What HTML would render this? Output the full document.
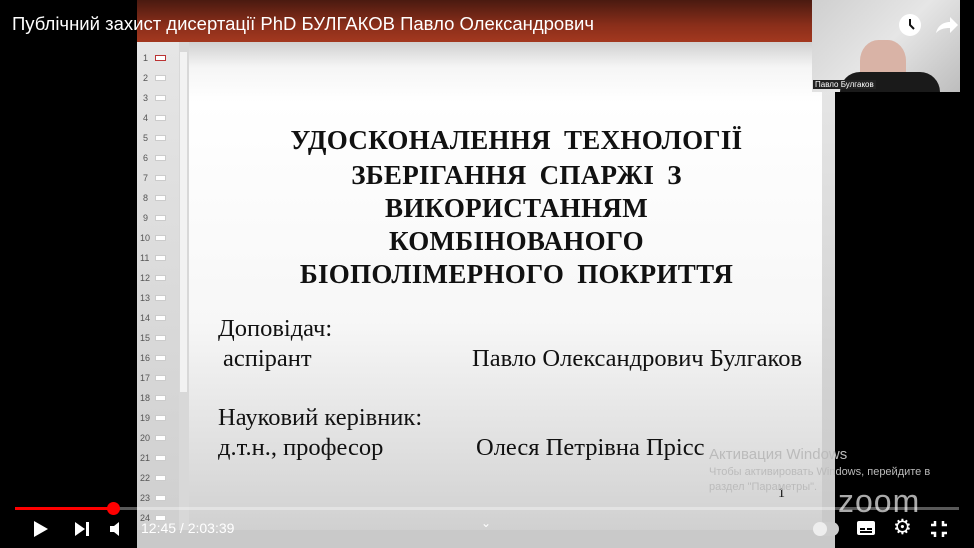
<!DOCTYPE html>
<html><head><meta charset="utf-8"><style>
*{margin:0;padding:0;box-sizing:border-box}
body{width:974px;height:548px;background:#000;position:relative;overflow:hidden;font-family:"Liberation Sans",sans-serif}
.abs{position:absolute}
#topbar{left:137px;top:0;width:698px;height:42px;background:linear-gradient(#4a1a10,#8a2e1a 60%,#a3381f)}
#thumbs{left:137px;top:42px;width:42px;height:490px;background:linear-gradient(#e6e6e6,#cfcfcf)}
#tsb{left:179px;top:42px;width:10px;height:490px;background:#d8d8d8}
#tsb div{position:absolute;left:1px;top:10px;width:7px;height:340px;background:#f2f2f2}
#slide{left:189px;top:42px;width:633px;height:490px;background:linear-gradient(#d0d0d0 0px,#f5f5f5 25px,#ffffff 60px,#f7f7f7 280px,#d0d0d0 490px)}
#rsb{left:822px;top:42px;width:13px;height:490px;background:linear-gradient(#e8e8e8,#c8c8c8)}
#status{left:137px;top:530px;width:698px;height:18px;background:#c9c9c9}
.num{position:absolute;left:143px;font-size:9px;color:#555}
.tb{position:absolute;left:155px;width:11px;height:6px;background:#fff;border:1px solid #ccc}
.ttl{position:absolute;left:189px;width:633px;text-align:center;font-family:"Liberation Serif",serif;font-weight:bold;font-size:27px;color:#111;word-spacing:6px;letter-spacing:0.3px}
.bt{position:absolute;font-family:"Liberation Serif",serif;font-size:24.5px;color:#111;white-space:nowrap}
#title{left:12px;top:13px;color:#fff;font-size:18.5px;white-space:nowrap}
#cam{left:812px;top:0;width:148px;height:92px;background:linear-gradient(135deg,#cfcfcf,#e6e6e6 50%,#bdbdbd)}
.ctl{position:absolute;color:#fff}
</style></head><body>
<div id="topbar" class="abs"></div>
<div id="thumbs" class="abs"></div>
<div id="tsb" class="abs"><div></div></div>
<div id="slide" class="abs"></div>
<div id="rsb" class="abs"></div>
<div id="status" class="abs"></div>
<div class="num" style="top:53px">1</div><div class="tb" style="top:55px;border-color:#b33"></div>
<div class="num" style="top:73px">2</div><div class="tb" style="top:75px"></div>
<div class="num" style="top:93px">3</div><div class="tb" style="top:95px"></div>
<div class="num" style="top:113px">4</div><div class="tb" style="top:115px"></div>
<div class="num" style="top:133px">5</div><div class="tb" style="top:135px"></div>
<div class="num" style="top:153px">6</div><div class="tb" style="top:155px"></div>
<div class="num" style="top:173px">7</div><div class="tb" style="top:175px"></div>
<div class="num" style="top:193px">8</div><div class="tb" style="top:195px"></div>
<div class="num" style="top:213px">9</div><div class="tb" style="top:215px"></div>
<div class="num" style="top:233px;left:140px">10</div><div class="tb" style="top:235px"></div>
<div class="num" style="top:253px;left:140px">11</div><div class="tb" style="top:255px"></div>
<div class="num" style="top:273px;left:140px">12</div><div class="tb" style="top:275px"></div>
<div class="num" style="top:293px;left:140px">13</div><div class="tb" style="top:295px"></div>
<div class="num" style="top:313px;left:140px">14</div><div class="tb" style="top:315px"></div>
<div class="num" style="top:333px;left:140px">15</div><div class="tb" style="top:335px"></div>
<div class="num" style="top:353px;left:140px">16</div><div class="tb" style="top:355px"></div>
<div class="num" style="top:373px;left:140px">17</div><div class="tb" style="top:375px"></div>
<div class="num" style="top:393px;left:140px">18</div><div class="tb" style="top:395px"></div>
<div class="num" style="top:413px;left:140px">19</div><div class="tb" style="top:415px"></div>
<div class="num" style="top:433px;left:140px">20</div><div class="tb" style="top:435px"></div>
<div class="num" style="top:453px;left:140px">21</div><div class="tb" style="top:455px"></div>
<div class="num" style="top:473px;left:140px">22</div><div class="tb" style="top:475px"></div>
<div class="num" style="top:493px;left:140px">23</div><div class="tb" style="top:495px"></div>
<div class="num" style="top:513px;left:140px">24</div><div class="tb" style="top:515px"></div>

<div class="ttl" style="top:125px;left:200px">УДОСКОНАЛЕННЯ ТЕХНОЛОГІЇ</div>
<div class="ttl" style="top:160px;left:200px">ЗБЕРІГАННЯ СПАРЖІ З</div>
<div class="ttl" style="top:193px;left:200px">ВИКОРИСТАННЯМ</div>
<div class="ttl" style="top:226px;left:200px">КОМБІНОВАНОГО</div>
<div class="ttl" style="top:259px;left:200px">БІОПОЛІМЕРНОГО ПОКРИТТЯ</div>

<div class="bt" style="left:218px;top:315px">Доповідач:</div>
<div class="bt" style="left:223px;top:345px">аспірант</div>
<div class="bt" style="left:472px;top:345px">Павло Олександрович Булгаков</div>
<div class="bt" style="left:218px;top:404px">Науковий керівник:</div>
<div class="bt" style="left:218px;top:434px">д.т.н., професор</div>
<div class="bt" style="left:476px;top:434px">Олеся Петрівна Прісс</div>
<div class="bt" style="left:778px;top:486px;font-size:14px">1</div>

<div class="abs" style="left:709px;top:446px;color:#bbb;font-size:15px">Активация Windows</div>
<div class="abs" style="left:709px;top:466px;color:#bbb;font-size:11px">Чтобы активировать Windows, перейдите в</div>
<div class="abs" style="left:709px;top:481px;color:#bbb;font-size:11px">раздел "Параметры".</div>
<div class="abs" style="left:838px;top:483px;color:#aaa;font-size:32px;letter-spacing:1px">zoom</div>

<div id="cam" class="abs"></div>
<div class="abs" style="left:860px;top:40px;width:46px;height:52px;background:#d9b3a6;border-radius:40% 40% 30% 30%"></div>
<div class="abs" style="left:840px;top:72px;width:100px;height:20px;background:#1a1a1a;border-radius:30px 30px 0 0"></div>
<div class="abs" style="left:813px;top:80px;background:#222;color:#fff;font-size:8px;padding:0 2px">Павло Булгаков</div>
<div class="abs" style="left:899px;top:14px;width:22px;height:22px;border-radius:50%;background:#fff"></div>
<svg class="abs" style="left:899px;top:14px" width="22" height="22"><path d="M11 5v6l4 4" stroke="#111" stroke-width="2" fill="none"/></svg>
<svg class="abs" style="left:934px;top:14px" width="26" height="22"><path d="M2 19c2-8 8-11 14-11V3l8 8-8 8v-5c-6 0-10 1-14 5z" fill="#fff"/></svg>

<div id="title" class="abs">Публічний захист дисертації PhD БУЛГАКОВ Павло Олександрович</div>

<div class="abs" style="left:15px;top:507px;width:944px;height:3px;background:rgba(255,255,255,0.35)"></div>
<div class="abs" style="left:15px;top:507px;width:99px;height:3px;background:#f00"></div>
<div class="abs" style="left:107px;top:502px;width:13px;height:13px;border-radius:50%;background:#f00"></div>
<svg class="abs" style="left:30px;top:519px" width="20" height="20"><path d="M4 2l14 8-14 8z" fill="#fff"/></svg>
<svg class="abs" style="left:73px;top:521px" width="18" height="16"><path d="M2 1l10 7-10 7z" fill="#fff"/><rect x="13" y="1" width="3" height="14" fill="#fff"/></svg>
<svg class="abs" style="left:109px;top:521px" width="16" height="16"><path d="M1 5h4l5-4v14l-5-4H1z" fill="#fff"/></svg>
<div class="ctl" style="left:141px;top:520px;font-size:14px">12:45 / 2:03:39</div>
<div class="ctl" style="left:481px;top:516px;font-size:12px">⌄</div>
<div class="abs" style="left:813px;top:522px;width:26px;height:14px;border-radius:7px;background:#ccc"></div>
<div class="abs" style="left:813px;top:522px;width:14px;height:14px;border-radius:7px;background:#eee"></div>
<svg class="abs" style="left:857px;top:520px" width="18" height="16"><rect x="0" y="1" width="18" height="14" rx="2" fill="#fff"/><rect x="3" y="8" width="5" height="2" fill="#000"/><rect x="10" y="8" width="5" height="2" fill="#000"/><rect x="3" y="11" width="12" height="2" fill="#000"/></svg>
<div class="ctl" style="left:893px;top:515px;font-size:21px">⚙</div>
<svg class="abs" style="left:930px;top:520px" width="18" height="18"><path d="M5 1v4H1M13 1v4h4M5 17v-4H1M13 17v-4h4" stroke="#fff" stroke-width="2.5" fill="none"/></svg>
</body></html>
